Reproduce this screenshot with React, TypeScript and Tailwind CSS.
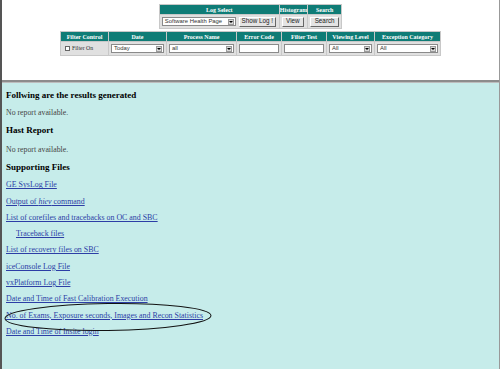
import React from 'react';

const serif = { fontFamily: '"Liberation Serif", "Times New Roman", serif' };
const sans = { fontFamily: '"Liberation Sans", Arial, sans-serif' };

const Select = ({ value, w }: { value: string; w: string }) => (
  <div className={`flex h-[9px] items-center border border-[#8a8a8a] bg-white ${w}`}>
    <span className="flex-1 overflow-hidden whitespace-nowrap pl-[2px] text-[5.9px] leading-none text-[#333]" style={sans}>
      {value}
    </span>
    <span className="mr-[1px] flex h-[6px] w-[6px] shrink-0 items-center justify-center border border-[#9a9a9a] bg-[#d8d8d8]">
      <span className="h-0 w-0 border-x-[2px] border-t-[2px] border-x-transparent border-t-black" />
    </span>
  </div>
);

const Btn = ({ label, w }: { label: string; w: string }) => (
  <div
    className={`flex h-[10px] items-center justify-center border border-t-white border-l-white border-r-[#666] border-b-[#666] bg-[#e4e4e4] text-[6.3px] leading-none text-[#222] ${w}`}
    style={sans}
  >
    {label}
  </div>
);

const Th = ({ children, w }: { children: React.ReactNode; w: string }) => (
  <td className={`h-[9px] bg-[#0f7c76] p-0 text-center text-[6px] font-bold leading-none whitespace-nowrap text-white ${w}`} style={serif}>
    {children}
  </td>
);

const Td = ({ children }: { children: React.ReactNode }) => (
  <td className="h-[13px] bg-[#e0e0e0] px-[2px] py-0 align-middle">{children}</td>
);

const links = [
  'GE SysLog File',
  'hiev',
  'List of corefiles and tracebacks on OC and SBC',
  'Traceback files',
  'List of recovery files on SBC',
  'iceConsole Log File',
  'vxPlatform Log File',
  'Date and Time of Fast Calibration Execution',
  'No. of Exams, Exposure seconds, Images and Recon Statistics',
  'Date and Time of Insite login',
];

export default function App() {
  return (
    <div className="flex h-[369px] w-[500px] flex-col overflow-hidden border-l-2 border-r border-l-[#555] border-r-[#999] bg-white">
      <div className="flex h-[80px] flex-col items-center gap-[2px] pt-[4px]">
        <table className="border-separate border-spacing-[1px] bg-[#c8c8c8]">
          <tbody>
            <tr>
              <Th w="w-[119px]">Log Select</Th>
              <Th w="w-[27px]">Histogram</Th>
              <Th w="w-[33px]">Search</Th>
            </tr>
            <tr>
              <Td>
                <div className="flex items-center gap-[3px]">
                  <Select value="Software Health Page" w="w-[74px]" />
                  <Btn label="Show Log !" w="w-[37px]" />
                </div>
              </Td>
              <Td>
                <Btn label="View" w="w-[22px]" />
              </Td>
              <Td>
                <Btn label="Search" w="w-[29px]" />
              </Td>
            </tr>
          </tbody>
        </table>
        <table className="border-separate border-spacing-[1px] bg-[#c8c8c8]">
          <tbody>
            <tr>
              <Th w="w-[47px]">Filter Control</Th>
              <Th w="w-[57px]">Date</Th>
              <Th w="w-[69px]">Process Name</Th>
              <Th w="w-[43px]">Error Code</Th>
              <Th w="w-[43px]">Filter Test</Th>
              <Th w="w-[47px]">Viewing Level</Th>
              <Th w="w-[65px]">Exception Category</Th>
            </tr>
            <tr>
              <Td>
                <div className="flex items-center gap-[2px] pl-[2px]">
                  <span className="h-[5px] w-[5px] border border-[#666] bg-white" />
                  <span className="text-[5.8px] leading-none text-[#333]" style={serif}>Filter On</span>
                </div>
              </Td>
              <Td>
                <Select value="Today" w="w-[53px]" />
              </Td>
              <Td>
                <Select value="all" w="w-[65px]" />
              </Td>
              <Td>
                <div className="h-[9px] w-[40px] border border-[#8a8a8a] bg-white" />
              </Td>
              <Td>
                <div className="h-[9px] w-[40px] border border-[#8a8a8a] bg-white" />
              </Td>
              <Td>
                <Select value="All" w="w-[43px]" />
              </Td>
              <Td>
                <Select value="All" w="w-[61px]" />
              </Td>
            </tr>
          </tbody>
        </table>
      </div>
      <div className="h-[3px] border-t-2 border-t-[#8c8c8c] bg-[#bdbdbd]" />
      <div className="relative flex-1 bg-[#c6ecea] pl-[4px] pt-[4px]" style={serif}>
        <div className="flex h-[17px] items-center text-[9px] font-bold text-black">Follwing are the results generated</div>
        <div className="flex h-[18px] items-center text-[7.8px] text-[#444]">No report available.</div>
        <div className="flex h-[18px] items-center text-[9px] font-bold text-black">Hast Report</div>
        <div className="flex h-[19px] items-center text-[7.8px] text-[#444]">No report available.</div>
        <div className="flex h-[18px] items-center text-[9px] font-bold text-black">Supporting Files</div>
        {links.map((l, i) => (
          <div key={i} className={`flex h-[16.3px] items-center text-[7.9px] ${l === 'Traceback files' ? 'pl-[10px]' : ''}`}>
            <a href="#" className="text-[#2c3ea6] underline">
              {l === 'hiev' ? (
                <>
                  Output of <i>hiev</i> command
                </>
              ) : (
                l
              )}
            </a>
          </div>
        ))}
        <svg className="pointer-events-none absolute left-0 top-0" width="500" height="290">
          <ellipse cx="106" cy="234" rx="103" ry="13.5" fill="none" stroke="#111" strokeWidth="1" transform="rotate(-0.8 106 234)" />
        </svg>
      </div>
    </div>
  );
}
